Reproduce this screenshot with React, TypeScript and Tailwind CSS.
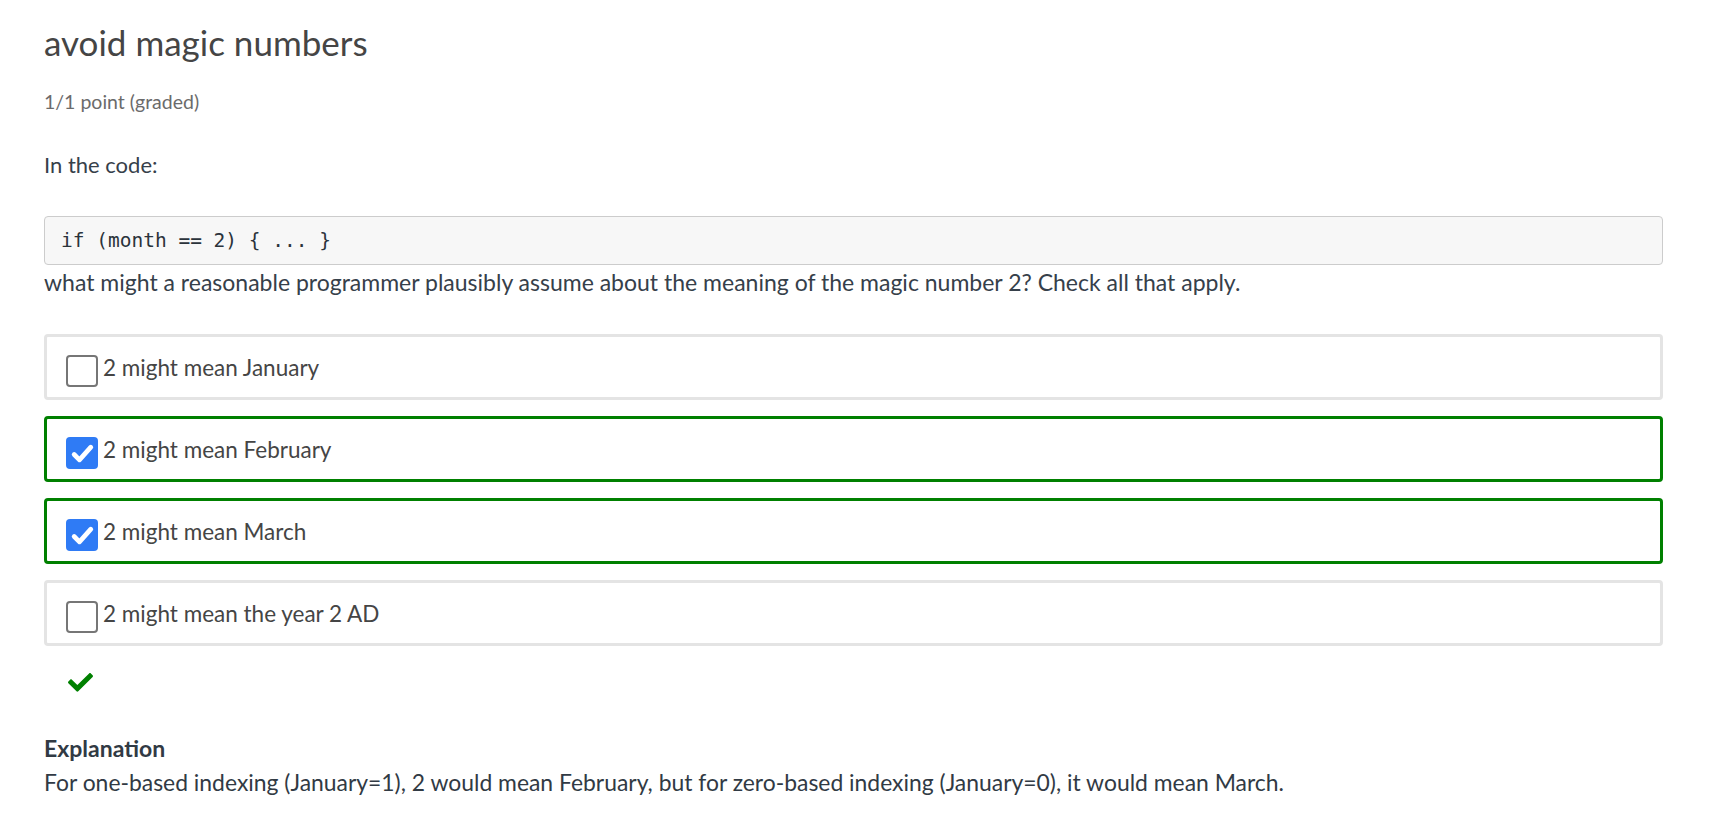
const options = [
  { label: "2 might mean January", checked: false },
  { label: "2 might mean February", checked: true },
  { label: "2 might mean March", checked: true },
  { label: "2 might mean the year 2 AD", checked: false },
];

function Box({ checked }: { checked: boolean }) {
  if (checked) {
    return (
      <span className="flex h-8 w-8 shrink-0 items-center justify-center rounded-[4px] bg-[#2f7bf5]">
        <svg width="27" height="27" viewBox="0 0 24 24" fill="none">
          <path d="M4.6 12.9l4.7 4.7L19.4 6.4" stroke="white" strokeWidth="4.2" strokeLinecap="round" strokeLinejoin="round" />
        </svg>
      </span>
    );
  }
  return <span className="h-8 w-8 shrink-0 rounded-[4px] border-2 border-[#767676] bg-white" />;
}

export default function App() {
  return (
    <div className="min-h-screen bg-white pl-[44px] pr-[51px] pt-[22px] font-['Lato',sans-serif] text-[#36404a]">
      <h2 className="text-[35px] leading-[40px] text-[#454545]">avoid magic numbers</h2>
      <div className="mt-[27px] text-[19.5px] leading-[26px] text-[#6b6b6b]">1/1 point (graded)</div>
      <p className="mt-[35px] text-[22px] leading-[30px]">In the code:</p>
      <pre className="mt-[36px] flex h-[49px] items-center rounded-[4px] border border-[#cccccc] bg-[#f7f7f7] pl-4 font-['DejaVu_Sans_Mono',monospace] text-[19.5px] text-[#2b333b]">
        if (month == 2) {"{"} ... {"}"}
      </pre>
      <p className="mt-[2px] text-[23px] leading-[30px]">
        what might a reasonable programmer plausibly assume about the meaning of the magic number 2? Check all that apply.
      </p>
      <div className="mt-[37px] flex flex-col gap-4">
        {options.map((o) => (
          <label
            key={o.label}
            className={
              "flex h-[66px] items-start gap-[5px] rounded-[4px] border-[3px] pl-[19px] pt-[18px] " +
              (o.checked ? "border-[#008000]" : "border-[#e4e4e4]")
            }
          >
            <Box checked={o.checked} />
            <span className="text-[22.5px] leading-[25px] text-[#454545]">{o.label}</span>
          </label>
        ))}
      </div>
      <div className="mt-[27px] pl-[24px]">
        <svg width="25" height="19" viewBox="0 66 512 386" fill="#008000">
          <path d="M173.898 439.404l-166.4-166.4c-9.997-9.997-9.997-26.206 0-36.204l36.203-36.204c9.997-9.998 26.207-9.998 36.204 0L192 312.69 432.095 72.596c9.997-9.997 26.207-9.997 36.204 0l36.203 36.204c9.997 9.997 9.997 26.206 0 36.204l-294.4 294.401c-9.998 9.997-26.207 9.997-36.204-.001z" />
        </svg>
      </div>
      <div className="mt-[41px] text-[23px] font-bold leading-[30px] text-[#313a44]">Explanation</div>
      <p className="mt-[4px] text-[22.9px] leading-[30px] text-[#313a44]">
        For one-based indexing (January=1), 2 would mean February, but for zero-based indexing (January=0), it would mean March.
      </p>
    </div>
  );
}
